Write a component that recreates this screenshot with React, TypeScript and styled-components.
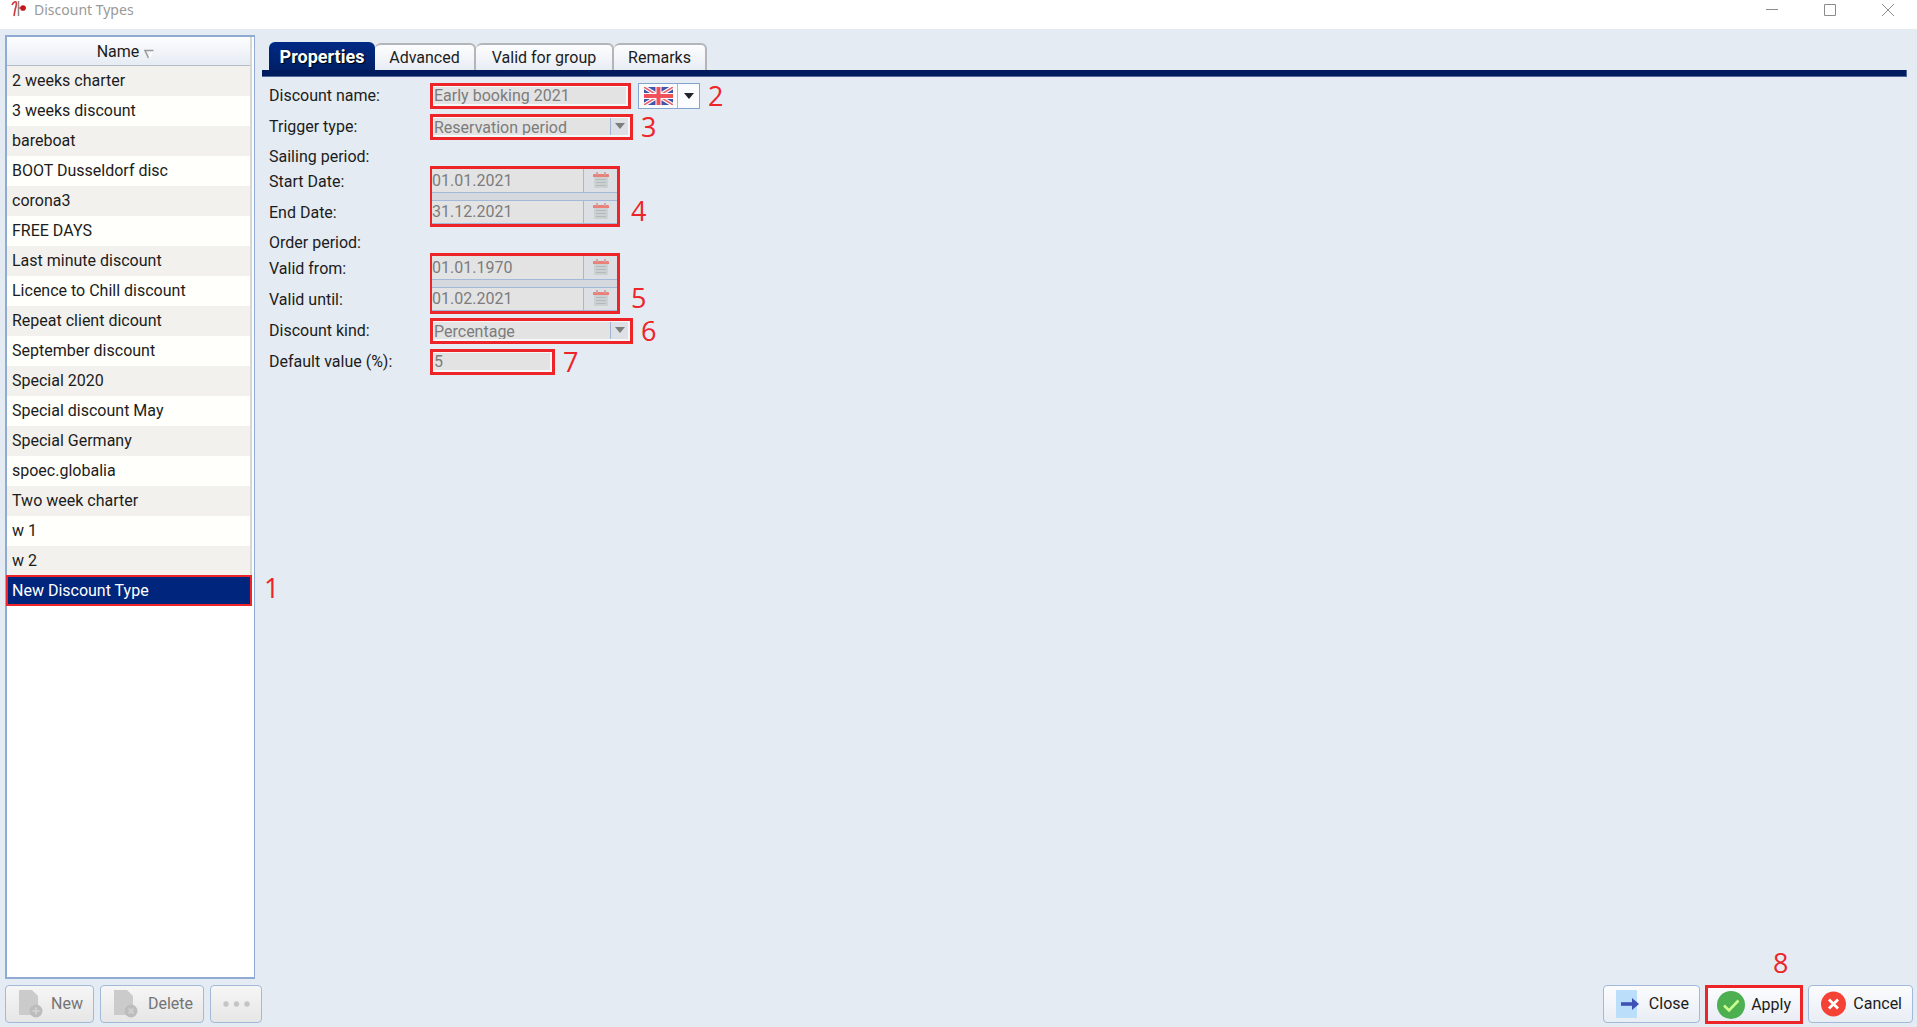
import React from "react";
import styled, { createGlobalStyle, css } from "styled-components";

const RED = "#ed2428";
const BLUE = "#a3b9da";

const GlobalStyle = createGlobalStyle`
  *, *::before, *::after { box-sizing: border-box; }
  body {
    margin: 0;
    background: #e4ebf3;
    color: #1c1c1c;
    font: 16px/20px Roboto, "Liberation Sans", sans-serif;
  }
  button, input, select { font: inherit; color: inherit; margin: 0; }
`;

const Window = styled.div`
  display: grid;
  grid-template-rows: auto 1fr auto;
  min-height: 100vh;
`;

const TitleBar = styled.header`
  display: flex;
  align-items: flex-start;
  height: 29px;
  padding-left: 11px;
  background: #fff;
`;

const Title = styled.h1`
  flex: 1;
  margin: 0 0 0 7px;
  font: 400 14px/20px "Noto Sans", "Open Sans", sans-serif;
  color: #999;
`;

const WindowButton = styled.button`
  display: flex;
  justify-content: center;
  width: 58px;
  padding: 4px 0 0;
  border: 0;
  background: none;
`;

const Main = styled.main`
  display: grid;
  grid-template-columns: 250px 1fr;
  gap: 7px;
  padding: 6px 10px 6px 5px;
`;

const ListPanel = styled.section`
  border: 2px solid #8fabd3;
  border-right-width: 1px;
  background: #fff;
`;

const List = styled.table`
  width: calc(100% - 2px);
  border-collapse: separate;
  border-spacing: 0;
  border-right: 2px solid #d6d6d2;
`;

const HeadCell = styled.th`
  height: 29px;
  padding: 2px 6px 0 0;
  border-bottom: 1px solid #b4bdc8;
  background: linear-gradient(#fdfdfe, #e6ecf4);
  font-weight: 400;
  svg { margin-left: 5px; vertical-align: -2px; }
`;

const Cell = styled.td<{ $selected: boolean }>`
  position: relative;
  height: 30px;
  padding: 0 0 0 5px;
  background: #fffffb;
  tr:nth-child(odd) > & { background: #f2f1ee; }
  ${(p) =>
    p.$selected &&
    css`
      && { background: #00257c; }
      color: #fff;
      &::after {
        content: "";
        position: absolute;
        inset: -1px -2px 0 -1px;
        border: 2px solid ${RED};
      }
    `}
`;

const Callout = styled.span`
  font: 400 27px/28px "Open Sans", "Noto Sans", sans-serif;
  color: ${RED};
`;

const RowCallout = styled(Callout)`
  position: absolute;
  left: calc(100% + 14px);
  top: -2px;
`;

const TopCallout = styled(Callout)`
  position: absolute;
  left: 65px;
  bottom: calc(100% + 11px);
`;

const Tabs = styled.div`
  display: flex;
  align-items: flex-end;
  height: 35px;
  padding-left: 7px;
`;

const Tab = styled.button<{ $active?: boolean; $width: number }>`
  width: ${(p) => p.$width}px;
  height: 27px;
  padding: 1px 0 0;
  border: 1px solid #b3b5b8;
  border-width: 2px 2px 0 0;
  border-radius: 6px 6px 0 0;
  background: linear-gradient(#fdfdfe, #e8edf4);
  ${(p) =>
    p.$active &&
    css`
      height: 28px;
      border: 0;
      background: linear-gradient(#002a86, #001f66);
      color: #fff;
      font-size: 18px;
      font-weight: 700;
      text-shadow: 1px 1px 1px #000;
    `}
`;

const TabRule = styled.div`
  height: 7px;
  border: 1px solid #53699c;
  border-width: 0 1px 1px 0;
  background: #001c5e;
`;

const Form = styled.form`
  display: grid;
  grid-template-columns: 161px 1fr;
  padding: 3px 0 0 7px;
`;

const Label = styled.label`
  height: 31px;
  line-height: 32px;
`;

const SectionLabel = styled.div`
  grid-column: 1 / -1;
  height: 24px;
  padding-top: 5px;
  ${Label} ~ ${Label} ~ ${Label} ~ & { height: 25px; }
`;

const Control = styled.div`
  display: flex;
  align-items: center;
  height: 31px;
`;

const Marked = styled.div<{ $width: number }>`
  display: flex;
  width: ${(p) => p.$width}px;
  height: 26px;
  border: 3px solid ${RED};
  background: #f6f7f8;
  padding: 1px 2px 2px 1px;
  & + ${Callout} { margin-left: 8px; }
`;

const fieldStyle = css`
  flex: 1;
  min-width: 0;
  height: 100%;
  padding: 0;
  border: 0;
  border-radius: 0;
  outline: 0;
  background: #e3e3e3;
  color: #7c7c7c;
  opacity: 1;
`;

const TextInput = styled.input`${fieldStyle}`;

const Select = styled.select`
  ${fieldStyle}
  appearance: none;
`;

const ArrowBox = styled.span`
  display: grid;
  place-items: center;
  width: 18px;
  border-left: 1px solid #9fb3d3;
  background: #dde0e4;
`;

const LanguageButton = styled.button`
  display: flex;
  align-items: center;
  height: 26px;
  margin: 0 8px 0 7px;
  padding: 0;
  border: 1px solid #86a3cf;
  background: #fbfcfe;
`;

const FlagBox = styled.span`
  display: flex;
  align-items: center;
  width: 39px;
  height: 100%;
  padding-left: 5px;
  border-right: 1px solid #a3b9da;
`;

const CaretBox = styled.span`
  display: grid;
  place-items: center;
  width: 21px;
`;

const DateGroup = styled.div`
  position: relative;
  grid-column: 2;
  grid-row: span 2;
  align-self: start;
  display: flex;
  flex-direction: column;
  gap: 7px;
  width: 190px;
  height: 61px;
  border: 3px solid ${RED};
  border-left-width: 2px;
  background: #d5d9dd;
`;

const DateRow = styled.div`
  display: flex;
  flex: 1;
  min-height: 0;
  border: 0 solid ${BLUE};
  border-bottom-width: 1px;
  & + & { border-top-width: 1px; }
`;

const DateButton = styled.button`
  display: grid;
  place-items: center;
  width: 34px;
  padding: 0;
  border: 0;
  border-left: 1px solid ${BLUE};
  background: #dcdfe3;
`;

const DateCallout = styled(Callout)`
  position: absolute;
  left: calc(100% + 14px);
  bottom: -1px;
`;

const Footer = styled.footer`
  display: flex;
  align-items: flex-start;
  gap: 6px;
  padding: 0 4px 4px 5px;
`;

const Spacer = styled.div`flex: 1;`;

const Button = styled.button<{ $width: number }>`
  display: flex;
  align-items: center;
  justify-content: space-between;
  width: ${(p) => p.$width}px;
  height: 38px;
  padding: 0 10px 0 12px;
  border: 1px solid ${BLUE};
  border-radius: 4px;
  background: linear-gradient(#fbfcfe, #e9edf4);
  &:disabled { color: #747474; background: linear-gradient(#f6f6f7, #e6e6e7); }
`;

const ApplyMark = styled.div`
  position: relative;
  border: 3px solid ${RED};
  margin: 0 -1px -1px;
  ${Button} { height: 33px; border: 0; border-radius: 0; padding: 0 9px; }
`;

const Caret = ({ color = "#1f2226" }: { color?: string }) => (
  <svg width="10" height="6" viewBox="0 0 10 6" aria-hidden="true">
    <path d="M0 0h10L5 6z" fill={color} />
  </svg>
);

const CalendarIcon = () => (
  <svg width="16" height="17" viewBox="0 0 16 17" aria-hidden="true">
    <path d="M1 4h14v11a1 1 0 0 1-1 1H2a1 1 0 0 1-1-1z" fill="#cbd0d1" />
    <path d="M0 5V3q0-1 1-1h14q1 0 1 1v2z" fill="#ea8078" />
    <path d="M3 0h2v3H3zM11 0h2v3h-2z" fill="#c9a8a5" />
    <path d="M3 7.500h10M3 10.500h10M3 13.500h10" stroke="#b4babc" />
  </svg>
);

const Flag = () => (
  <svg width="29" height="18" viewBox="0 0 29 18" aria-hidden="true">
    <path d="M0 0h29v18H0z" fill="#4353ac" />
    <path d="M0 0l29 18M29 0L0 18" stroke="#fff" strokeWidth="4" />
    <path d="M0 0l29 18M29 0L0 18" stroke="#f0606a" strokeWidth="1.500" />
    <path d="M14.500 0v18M0 9h29" stroke="#fff" strokeWidth="6" />
    <path d="M14.500 0v18M0 9h29" stroke="#f0505a" strokeWidth="4" />
  </svg>
);

const Logo = () => (
  <svg width="16" height="18" viewBox="0 0 16 18" aria-hidden="true">
    <path d="M1 5Q3 1 5 2Q6 4 4 10L3 16" fill="none" stroke="#cf3a3f" strokeWidth="1.600" />
    <path d="M7.500 1v15" stroke="#8e8487" strokeWidth="1.500" />
    <circle cx="12" cy="8" r="2.800" fill="#c4161c" />
    <path d="M8 8h7" stroke="#c4161c" />
  </svg>
);

const DocIcon = ({ kind }: { kind: "plus" | "cross" }) => (
  <svg width="26" height="28" viewBox="0 0 26 28" aria-hidden="true">
    <path d="M1 0h13l6 6v19H1z" fill="#cbcbcb" />
    <circle cx="18" cy="21" r="6.500" fill="#bdbdbd" />
    <path d={kind === "plus" ? "M18 17.500v7M14.500 21h7" : "M15.500 18.500l5 5M20.500 18.500l-5 5"} stroke="#d0d0d0" strokeWidth="2" />
  </svg>
);

const CloseIcon = () => (
  <svg width="24" height="28" viewBox="0 0 24 28" aria-hidden="true">
    <rect width="21" height="28" rx="1" fill="#bbdefb" />
    <path d="M5 14h12" stroke="#3f51b5" strokeWidth="3.600" />
    <path d="M16 8l7 6-7 6z" fill="#3f51b5" />
  </svg>
);

const ApplyIcon = () => (
  <svg width="28" height="28" viewBox="0 0 28 28" aria-hidden="true">
    <circle cx="14" cy="14" r="14" fill="#4caf50" />
    <path d="M7 14.500l5 5 9.500-10" fill="none" stroke="#ccff90" strokeWidth="2.600" />
  </svg>
);

const CancelIcon = () => (
  <svg width="26" height="26" viewBox="0 0 26 26" aria-hidden="true">
    <circle cx="12.500" cy="13" r="12.500" fill="#f44336" />
    <path d="M8 8.500l9 9M17 8.500l-9 9" stroke="#fff" strokeWidth="2.800" />
  </svg>
);

const types = [
  "2 weeks charter", "3 weeks discount", "bareboat", "BOOT Dusseldorf disc", "corona3",
  "FREE DAYS", "Last minute discount", "Licence to Chill discount", "Repeat client dicount",
  "September discount", "Special 2020", "Special discount May", "Special Germany",
  "spoec.globalia", "Two week charter", "w 1", "w 2", "New Discount Type",
];

const DateField = ({ id, value }: { id: string; value: string }) => (
  <DateRow>
    <TextInput id={id} defaultValue={value} disabled />
    <DateButton type="button" aria-label="Pick date" disabled><CalendarIcon /></DateButton>
  </DateRow>
);

const SelectField = ({ id, value, callout }: { id: string; value: string; callout: string }) => (
  <Control>
    <Marked $width={203}>
      <Select id={id} disabled><option>{value}</option></Select>
      <ArrowBox><Caret color="#7d7d7d" /></ArrowBox>
    </Marked>
    <Callout>{callout}</Callout>
  </Control>
);

export default function App() {
  return (
    <Window>
      <GlobalStyle />
      <TitleBar>
        <Logo />
        <Title>Discount Types</Title>
        <WindowButton aria-label="Minimize">
          <svg width="12" height="12" viewBox="0 0 12 12"><path d="M0 5.500h12" stroke="#8c8c8c" /></svg>
        </WindowButton>
        <WindowButton aria-label="Maximize">
          <svg width="12" height="12" viewBox="0 0 12 12"><path d="M.5.5h11v11H.5z" fill="none" stroke="#8c8c8c" /></svg>
        </WindowButton>
        <WindowButton aria-label="Close window">
          <svg width="12" height="12" viewBox="0 0 12 12"><path d="M0 0l12 12M12 0L0 12" stroke="#8c8c8c" /></svg>
        </WindowButton>
      </TitleBar>
      <Main>
        <ListPanel>
          <List>
            <thead>
              <tr>
                <HeadCell>
                  Name
                  <svg width="10" height="10" viewBox="0 0 10 10" aria-hidden="true">
                    <path d="M9 1L5 9" fill="none" stroke="#fff" strokeWidth="1.500" />
                    <path d="M9.500 1.500H1L4.500 9" fill="none" stroke="#9a9a9a" strokeWidth="1.500" />
                  </svg>
                </HeadCell>
              </tr>
            </thead>
            <tbody>
              {types.map((name, i) => {
                const selected = i === types.length - 1;
                return (
                  <tr key={name}>
                    <Cell $selected={selected}>
                      {name}
                      {selected && <RowCallout>1</RowCallout>}
                    </Cell>
                  </tr>
                );
              })}
            </tbody>
          </List>
        </ListPanel>
        <section>
          <Tabs role="tablist">
            <Tab role="tab" aria-selected $active $width={106}>Properties</Tab>
            <Tab role="tab" $width={101}>Advanced</Tab>
            <Tab role="tab" $width={138}>Valid for group</Tab>
            <Tab role="tab" $width={93}>Remarks</Tab>
          </Tabs>
          <TabRule />
          <Form>
            <Label htmlFor="name">Discount name:</Label>
            <Control>
              <Marked $width={201}><TextInput id="name" defaultValue="Early booking 2021" disabled /></Marked>
              <LanguageButton type="button" aria-label="Language">
                <FlagBox><Flag /></FlagBox>
                <CaretBox><Caret /></CaretBox>
              </LanguageButton>
              <Callout>2</Callout>
            </Control>
            <Label htmlFor="trigger">Trigger type:</Label>
            <SelectField id="trigger" value="Reservation period" callout="3" />
            <SectionLabel>Sailing period:</SectionLabel>
            <Label htmlFor="start">Start Date:</Label>
            <DateGroup>
              <DateField id="start" value="01.01.2021" />
              <DateField id="end" value="31.12.2021" />
              <DateCallout>4</DateCallout>
            </DateGroup>
            <Label htmlFor="end">End Date:</Label>
            <SectionLabel>Order period:</SectionLabel>
            <Label htmlFor="from">Valid from:</Label>
            <DateGroup>
              <DateField id="from" value="01.01.1970" />
              <DateField id="until" value="01.02.2021" />
              <DateCallout>5</DateCallout>
            </DateGroup>
            <Label htmlFor="until">Valid until:</Label>
            <Label htmlFor="kind">Discount kind:</Label>
            <SelectField id="kind" value="Percentage" callout="6" />
            <Label htmlFor="value">Default value (%):</Label>
            <Control>
              <Marked $width={125}><TextInput id="value" defaultValue="5" disabled /></Marked>
              <Callout>7</Callout>
            </Control>
          </Form>
        </section>
      </Main>
      <Footer>
        <Button $width={89} disabled><DocIcon kind="plus" />New</Button>
        <Button $width={104} disabled><DocIcon kind="cross" />Delete</Button>
        <Button $width={52} disabled aria-label="More">
          <svg width="28" height="6" viewBox="0 0 28 6" aria-hidden="true">
            <g fill="#c4c4c4"><circle cx="3" cy="3" r="2.700" /><circle cx="13.500" cy="3" r="2.700" /><circle cx="24" cy="3" r="2.700" /></g>
          </svg>
        </Button>
        <Spacer />
        <Button $width={97}><CloseIcon />Close</Button>
        <ApplyMark>
          <TopCallout>8</TopCallout>
          <Button $width={92}><ApplyIcon />Apply</Button>
        </ApplyMark>
        <Button $width={105}><CancelIcon />Cancel</Button>
      </Footer>
    </Window>
  );
}
